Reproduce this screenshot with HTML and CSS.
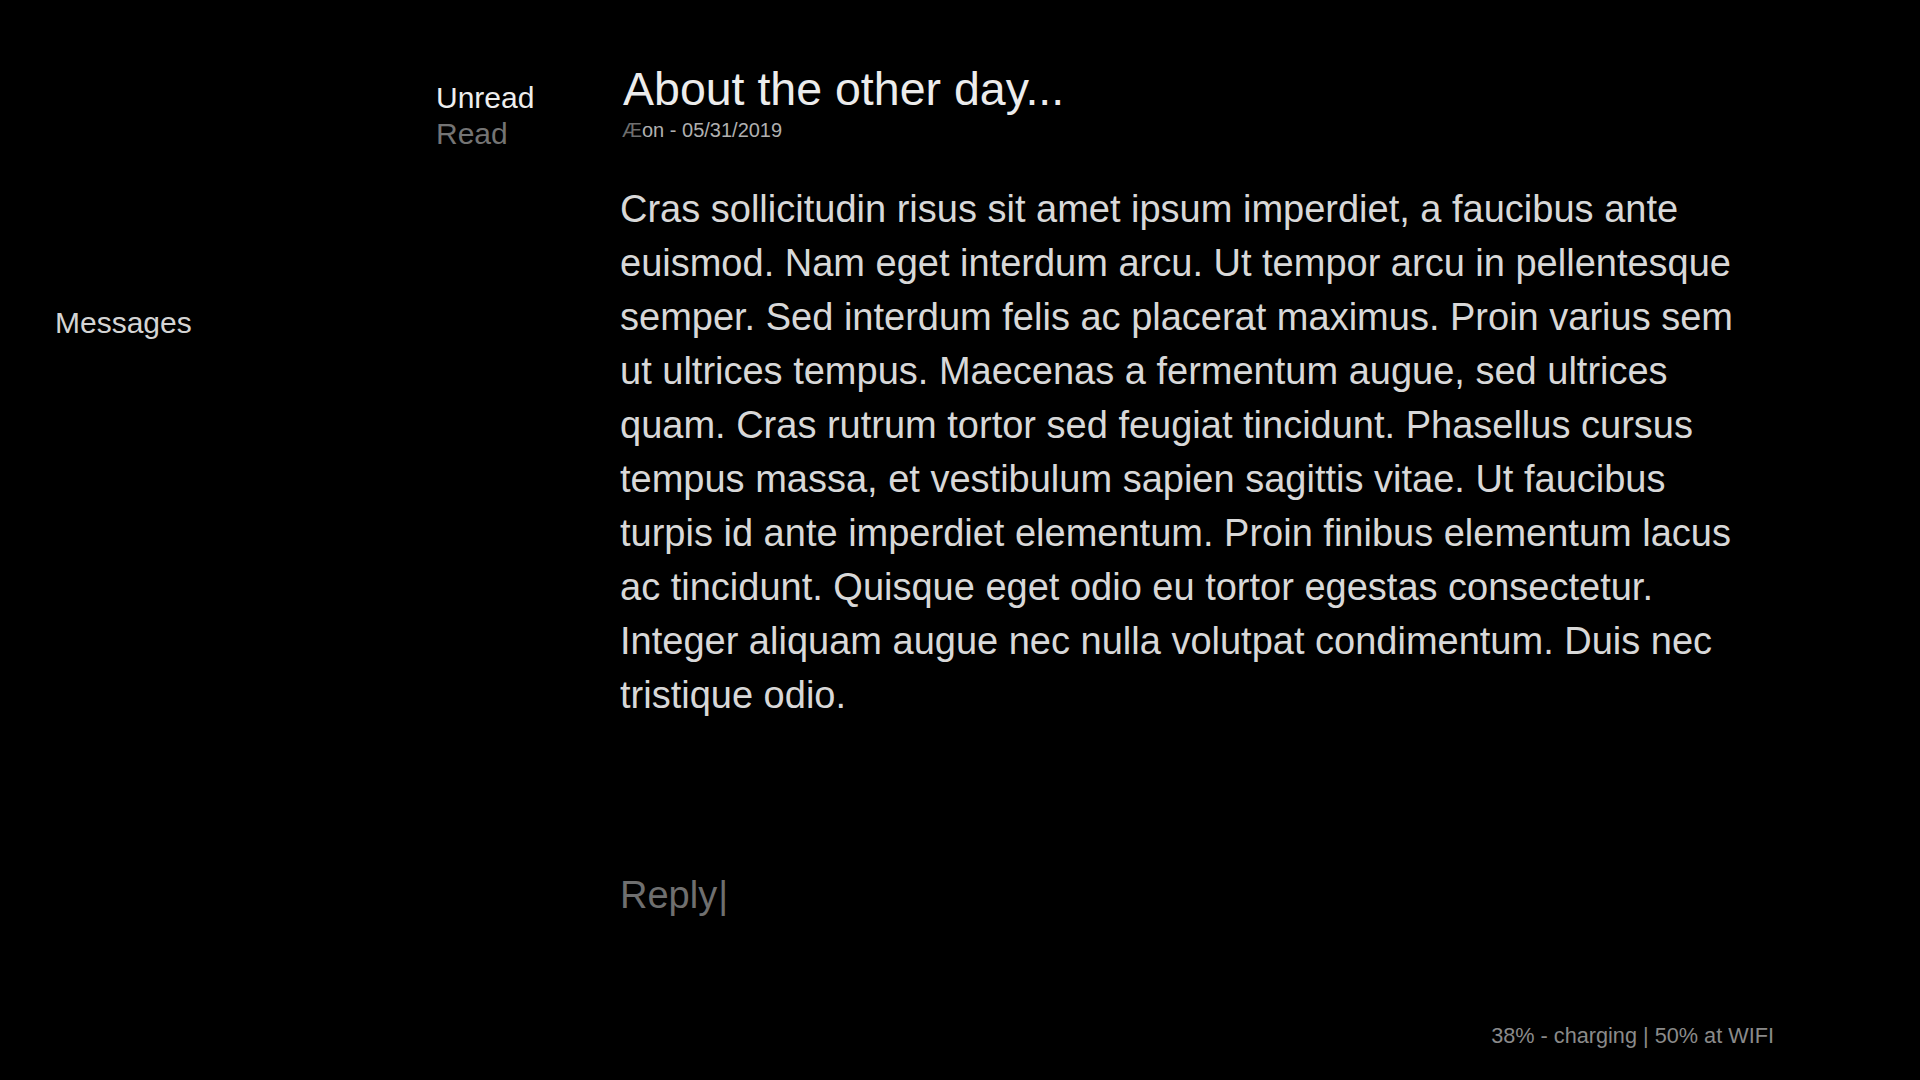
FILE: index.html
```html
<!DOCTYPE html>
<html lang="en">
<head>
<meta charset="utf-8">
<title>Messages</title>
<link rel="stylesheet" href="styles.css">
</head>
<body>
<div class="page">
  <main class="main">
    <nav class="sidebar">
      <div class="nav-item">Messages</div>
    </nav>
    <div class="tabs">
      <div class="tab tab-active">Unread</div>
      <div class="tab">Read</div>
    </div>
    <article class="message">
      <h1 class="title">About the other day...</h1>
      <div class="meta"><span class="meta-ae">Æ</span>on - 05/31/2019</div>
      <p class="body">Cras sollicitudin risus sit amet ipsum imperdiet, a faucibus ante euismod. Nam eget interdum arcu. Ut tempor arcu in pellentesque semper. Sed interdum felis ac placerat maximus. Proin varius sem ut ultrices tempus. Maecenas a fermentum augue, sed ultrices quam. Cras rutrum tortor sed feugiat tincidunt. Phasellus cursus tempus massa, et vestibulum sapien sagittis vitae. Ut faucibus turpis id ante imperdiet elementum. Proin finibus elementum lacus ac tincidunt. Quisque eget odio eu tortor egestas consectetur. Integer aliquam augue nec nulla volutpat condimentum. Duis nec tristique odio.</p>
      <div class="reply">Reply<span class="cursor">|</span></div>
    </article>
  </main>
  <footer class="status">38% - charging | 50% at WIFI</footer>
</div>
</body>
</html>
```
FILE: styles.css
```css
html, body {
  margin: 0;
  padding: 0;
  background: #000;
}
body {
  font-family: "Liberation Sans", Arial, Helvetica, sans-serif;
  color: #d8d8d8;
}
.page {
  min-height: 100vh;
  display: flex;
  flex-direction: column;
}
.main {
  flex: 1;
  display: flex;
  align-items: flex-start;
}
.sidebar {
  width: 381px;
  padding: 305px 0 0 55px;
}
.nav-item {
  font-size: 30px;
  line-height: 36px;
  color: #d4d4d4;
}
.tabs {
  width: 184px;
  padding-top: 80px;
}
.tab {
  font-size: 30px;
  line-height: 36px;
  color: #747474;
}
.tab-active {
  color: #eeeeee;
}
.message {
  width: 1140px;
  padding-top: 63px;
}
.title {
  margin: 0;
  padding-left: 3px;
  font-size: 46.5px;
  line-height: 53px;
  font-weight: normal;
  color: #ececec;
}
.meta {
  margin-top: 2px;
  padding-left: 2px;
  font-size: 20px;
  line-height: 24px;
  color: #b0b0b0;
}
.meta-ae {
  color: #6e6e6e;
}
.body {
  margin: 40px 0 0 0;
  font-size: 38px;
  line-height: 54px;
  color: #d8d8d8;
}
.reply {
  margin-top: 146px;
  font-size: 38px;
  line-height: 54px;
  color: #6f6f6f;
}
.cursor {
  margin-left: 1px;
}
.status {
  text-align: right;
  padding: 0 146px 31px 0;
  font-size: 21.7px;
  line-height: 26px;
  color: #8a8a8a;
}
```
